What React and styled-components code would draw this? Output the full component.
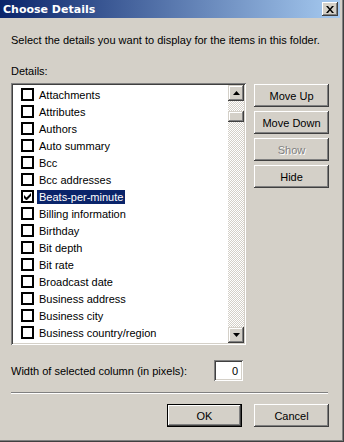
import React from "react";
import styled, { createGlobalStyle } from "styled-components";

const GlobalStyle = createGlobalStyle`
  body {
    margin: 0;
    font-family: "Liberation Sans", Arial, sans-serif;
    font-size: 11px;
    color: #000;
  }
`;

const face = "#d4d0c8";

const Window = styled.div`
  width: 344px;
  height: 442px;
  box-sizing: border-box;
  background: ${face};
  display: flex;
  flex-direction: column;
  padding: 0 4px 3px 0;
  box-shadow: inset -1px -1px #404040, inset -2px -2px #808080;
`;

const TitleBar = styled.div`
  height: 18px;
  display: flex;
  align-items: center;
  justify-content: space-between;
  padding: 0 2px 0 3px;
  background: linear-gradient(to right, #0a246a, #a6caf0);
`;

const Title = styled.span`
  font-family: "DejaVu Sans", sans-serif;
  font-weight: bold;
  font-size: 11px;
  color: #fff;
`;

const CloseButton = styled.div`
  width: 16px;
  height: 14px;
  box-sizing: border-box;
  background: ${face};
  display: flex;
  align-items: center;
  justify-content: center;
  box-shadow: inset -1px -1px #404040, inset 1px 1px #fff,
    inset -2px -2px #808080, inset 2px 2px ${face};
`;

const Body = styled.div`
  display: flex;
  flex-direction: column;
  padding-left: 11px;
`;

const Text = styled.div`
  line-height: 13px;
  margin-top: ${(p) => p.mt || 0}px;
  white-space: nowrap;
`;

const MainRow = styled.div`
  display: flex;
  margin-top: 5px;
`;

const sunken = `
  box-shadow: inset 1px 1px #808080, inset -1px -1px #fff,
    inset 2px 2px #404040, inset -2px -2px ${face};
`;

const ListBox = styled.div`
  width: 235px;
  height: 262px;
  box-sizing: border-box;
  padding: 2px;
  background: #fff;
  display: flex;
  ${sunken}
`;

const Items = styled.div`
  flex: 1;
  overflow: hidden;
  padding-top: 1px;
`;

const Item = styled.div`
  height: 17px;
  display: flex;
  align-items: center;
  padding-left: 8px;
`;

const Check = styled.div`
  width: 13px;
  height: 13px;
  box-sizing: border-box;
  border: 2px solid #000;
  background: #fff;
  display: flex;
  align-items: center;
  justify-content: center;
  flex-shrink: 0;
`;

const Label = styled.span`
  margin-left: 3px;
  padding: 0 2px;
  line-height: 14px;
  white-space: nowrap;
  background: ${(p) => (p.selected ? "#0a246a" : "transparent")};
  color: ${(p) => (p.selected ? "#fff" : "#000")};
`;

const ScrollBar = styled.div`
  width: 16px;
  display: flex;
  flex-direction: column;
  background-color: ${face};
  background-image: repeating-conic-gradient(#fff 0 25%, ${face} 0 50%);
  background-size: 2px 2px;
`;

const raised = `
  background: ${face};
  box-shadow: inset -1px -1px #404040, inset 1px 1px ${face},
    inset -2px -2px #808080, inset 2px 2px #fff;
`;

const ArrowButton = styled.div`
  height: 16px;
  display: flex;
  align-items: center;
  justify-content: center;
  ${raised}
`;

const Thumb = styled.div`
  height: 11px;
  margin-top: ${(p) => p.offset}px;
  ${raised}
`;

const Track = styled.div`
  flex: 1;
`;

const SideButtons = styled.div`
  display: flex;
  flex-direction: column;
  gap: 4px;
  margin: 1px 0 0 8px;
`;

const Button = styled.div`
  width: 75px;
  height: 23px;
  box-sizing: border-box;
  display: flex;
  align-items: center;
  justify-content: center;
  background: ${face};
  color: ${(p) => (p.disabled ? "#808080" : "#000")};
  text-shadow: ${(p) => (p.disabled ? "1px 1px #fff" : "none")};
  box-shadow: ${(p) =>
    p.primary
      ? `inset 0 0 0 1px #000, inset -2px -2px #404040, inset 2px 2px #fff, inset -3px -3px #808080`
      : `inset -1px -1px #404040, inset 1px 1px #fff, inset -2px -2px #808080, inset 2px 2px ${face}`};
`;

const WidthRow = styled.div`
  width: 232px;
  display: flex;
  align-items: center;
  justify-content: space-between;
  margin-top: 15px;
`;

const NumberBox = styled.div`
  width: 29px;
  height: 21px;
  box-sizing: border-box;
  background: #fff;
  display: flex;
  align-items: center;
  justify-content: flex-end;
  padding-right: 5px;
  ${sunken}
`;

const Separator = styled.div`
  width: 317px;
  height: 1px;
  margin-top: 11px;
  background: #808080;
  border-bottom: 1px solid #fff;
`;

const Footer = styled.div`
  width: 318px;
  display: flex;
  justify-content: flex-end;
  gap: 12px;
  margin-top: 10px;
`;

const details = [
  "Attachments",
  "Attributes",
  "Authors",
  "Auto summary",
  "Bcc",
  "Bcc addresses",
  "Beats-per-minute",
  "Billing information",
  "Birthday",
  "Bit depth",
  "Bit rate",
  "Broadcast date",
  "Business address",
  "Business city",
  "Business country/region",
];

const CheckMark = () => (
  <svg width="7" height="7" viewBox="0 0 7 7">
    <path d="M0 2v3l2 2h1l4-4V0L2.5 4.5z" fill="#000" />
  </svg>
);

const Arrow = ({ down }) => (
  <svg width="7" height="4" viewBox="0 0 7 4">
    <path d={down ? "M0 0h7L3.5 4z" : "M3.5 0L7 4H0z"} fill="#000" />
  </svg>
);

const App = () => {
  const checked = "Beats-per-minute";
  return (
    <>
      <GlobalStyle />
      <Window>
        <TitleBar>
          <Title>Choose Details</Title>
          <CloseButton>
            <svg width="8" height="7" viewBox="0 0 8 7">
              <path d="M0 0h2l2 2.5L6 0h2L5 3.5 8 7H6L4 4.5 2 7H0l3-3.5z" fill="#000" />
            </svg>
          </CloseButton>
        </TitleBar>
        <Body>
          <Text mt={16}>
            Select the details you want to display for the items in this folder.
          </Text>
          <Text mt={18}>Details:</Text>
          <MainRow>
            <ListBox>
              <Items>
                {details.map((d) => (
                  <Item key={d}>
                    <Check>{d === checked && <CheckMark />}</Check>
                    <Label selected={d === checked}>{d}</Label>
                  </Item>
                ))}
                {/* next row is scrolled mostly out of view, only its box edge shows */}
                <Item>
                  <Check />
                </Item>
              </Items>
              <ScrollBar>
                <ArrowButton>
                  <Arrow />
                </ArrowButton>
                <Thumb offset={10} />
                <Track />
                <ArrowButton>
                  <Arrow down />
                </ArrowButton>
              </ScrollBar>
            </ListBox>
            <SideButtons>
              <Button>Move Up</Button>
              <Button>Move Down</Button>
              <Button disabled>Show</Button>
              <Button>Hide</Button>
            </SideButtons>
          </MainRow>
          <WidthRow>
            <span>Width of selected column (in pixels):</span>
            <NumberBox>0</NumberBox>
          </WidthRow>
          <Separator />
          <Footer>
            <Button primary>OK</Button>
            <Button>Cancel</Button>
          </Footer>
        </Body>
      </Window>
    </>
  );
};

export default App;
